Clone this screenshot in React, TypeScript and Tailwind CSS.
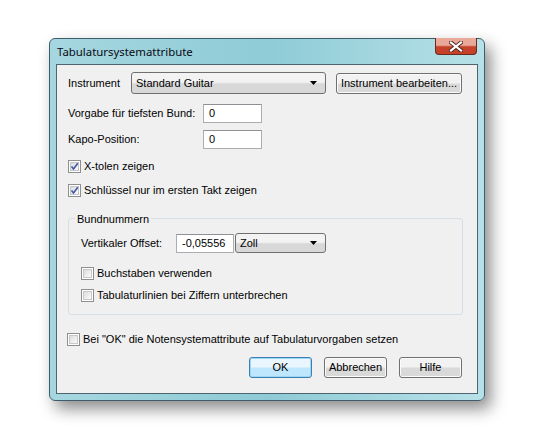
import React from 'react';

const font = { fontFamily: 'Tahoma, "Liberation Sans", Arial, sans-serif' };

function Checkbox({ checked, label }: { checked?: boolean; label: string }) {
  return (
    <div className="flex items-center h-[14px]">
      <div className="w-[13px] h-[13px] border border-[#8e8f8f] bg-white p-[1px] shrink-0">
        <div className="w-full h-full bg-gradient-to-br from-[#dcdcdc] to-[#fbfbfb] border border-[#c8c8c8] relative">
          {checked && (
            <svg viewBox="0 0 9 9" className="absolute -left-[1px] -top-[1px] w-[9px] h-[9px]">
              <path d="M1.5 4.5 L3.5 7 L7.8 1.2" fill="none" stroke="#3d57a8" strokeWidth="1.6" />
            </svg>
          )}
        </div>
      </div>
      <span className="ml-[3px] text-[11px] text-black leading-none">{label}</span>
    </div>
  );
}

function Combo({ value, w, h }: { value: string; w: string; h: string }) {
  return (
    <div
      className={`${w} ${h} flex items-center justify-between rounded-[3px] border border-[#707070] bg-gradient-to-b from-[#f3f3f3] from-45% to-[#d8d8d8] to-55% pl-[4px] pr-[8px]`}
    >
      <span className="text-[11px] leading-none text-black">{value}</span>
      <svg width="7" height="4" viewBox="0 0 7 4">
        <path d="M0 0 H7 L3.5 4 Z" fill="#000" />
      </svg>
    </div>
  );
}

function Field({ value, w }: { value: string; w: string }) {
  return (
    <div className={`${w} h-[19px] flex items-center bg-white border border-[#abadb3] border-t-[#8e9095] px-[5px]`}>
      <span className="text-[11px] leading-none text-black">{value}</span>
    </div>
  );
}

function Button({ label, primary, w }: { label: string; primary?: boolean; w: string }) {
  return (
    <div
      className={`${w} h-[21px] flex items-center justify-center rounded-[3px] border ${
        primary
          ? 'border-[#3c7fb1] bg-gradient-to-b from-[#eaf6fd] from-45% to-[#bee6fd] to-55% shadow-[inset_0_0_0_1px_#9ed6f5]'
          : 'border-[#707070] bg-gradient-to-b from-[#f2f2f2] from-45% to-[#d9d9d9] to-55% shadow-[inset_0_0_0_1px_#fbfbfb]'
      }`}
    >
      <span className="text-[11px] leading-none text-black">{label}</span>
    </div>
  );
}

export default function App() {
  return (
    <div className="w-[537px] h-[441px] bg-white pl-[49px] pt-[38px]" style={font}>
      <div className="w-[436px] h-[363px] rounded-[6px] border border-[#3d5d6a] bg-gradient-to-r from-[#a6d7e0] via-[#8ecbd6] to-[#b7e1e8] shadow-[6px_8px_16px_rgba(0,0,0,0.45)] flex flex-col px-[6px] pb-[6px]">
        {/* title bar */}
        <div className="h-[25px] flex items-start justify-between">
          <span
            className="mt-[4px] ml-[1px] text-[11.4px] text-[#0a0a14]"
            style={{ fontFamily: '"Noto Sans", "Open Sans", sans-serif' }}
          >
            Tabulatursystemattribute
          </span>
          <div className="w-[42px] h-[17px] -mt-[1px] mr-[1px] rounded-b-[4px] border border-[#6b2a1e] border-t-0 bg-gradient-to-b from-[#e9a898] from-45% to-[#c5412a] to-55% flex items-center justify-center">
            <svg width="14" height="11" viewBox="0 0 14 11">
              <path d="M2 1.5 L12 9.5 M12 1.5 L2 9.5" stroke="#4a2a24" strokeWidth="4" strokeLinecap="square" />
              <path d="M2 1.5 L12 9.5 M12 1.5 L2 9.5" stroke="#ffffff" strokeWidth="2.2" strokeLinecap="square" />
            </svg>
          </div>
        </div>

        {/* client area */}
        <div className="flex-1 bg-[#f0f0f0] border border-[#4e6570] flex flex-col pl-[11px]">
          <div className="flex items-center mt-[7px] h-[22px]">
            <span className="w-[63px] text-[11px] text-black">Instrument</span>
            <Combo value="Standard Guitar" w="w-[195px]" h="h-[22px]" />
            <div className="ml-[10px]">
              <Button label="Instrument bearbeiten..." w="w-[126px]" />
            </div>
          </div>

          <div className="flex items-center mt-[10px]">
            <span className="w-[135px] text-[11px] text-black">Vorgabe für tiefsten Bund:</span>
            <Field value="0" w="w-[59px]" />
          </div>
          <div className="flex items-center mt-[7px]">
            <span className="w-[135px] text-[11px] text-black">Kapo-Position:</span>
            <Field value="0" w="w-[59px]" />
          </div>

          <div className="mt-[10px]">
            <Checkbox checked label="X-tolen zeigen" />
          </div>
          <div className="mt-[10px]">
            <Checkbox checked label="Schlüssel nur im ersten Takt zeigen" />
          </div>

          {/* group box */}
          <div className="mt-[21px] w-[395px] h-[97px] border border-[#d5dfe5] rounded-[3px] relative flex flex-col pl-[12px]">
            <span className="absolute -top-[8px] left-[6px] px-[2px] bg-[#f0f0f0] text-[11px] text-black">
              Bundnummern
            </span>
            <div className="flex items-center mt-[14px]">
              <span className="w-[95px] text-[11px] text-black">Vertikaler Offset:</span>
              <Field value="-0,05556" w="w-[58px]" />
              <div className="ml-[1px]">
                <Combo value="Zoll" w="w-[91px]" h="h-[20px]" />
              </div>
            </div>
            <div className="mt-[13px]">
              <Checkbox label="Buchstaben verwenden" />
            </div>
            <div className="mt-[8px]">
              <Checkbox label="Tabulaturlinien bei Ziffern unterbrechen" />
            </div>
          </div>

          <div className="mt-[17px] -ml-[1px]">
            <Checkbox label={'Bei "OK" die Notensystemattribute auf Tabulaturvorgaben setzen'} />
          </div>

          <div className="flex mt-[11px] pl-[181px] gap-[12px]">
            <Button label="OK" primary w="w-[63px]" />
            <Button label="Abbrechen" w="w-[63px]" />
            <Button label="Hilfe" w="w-[63px]" />
          </div>
        </div>
      </div>
    </div>
  );
}
